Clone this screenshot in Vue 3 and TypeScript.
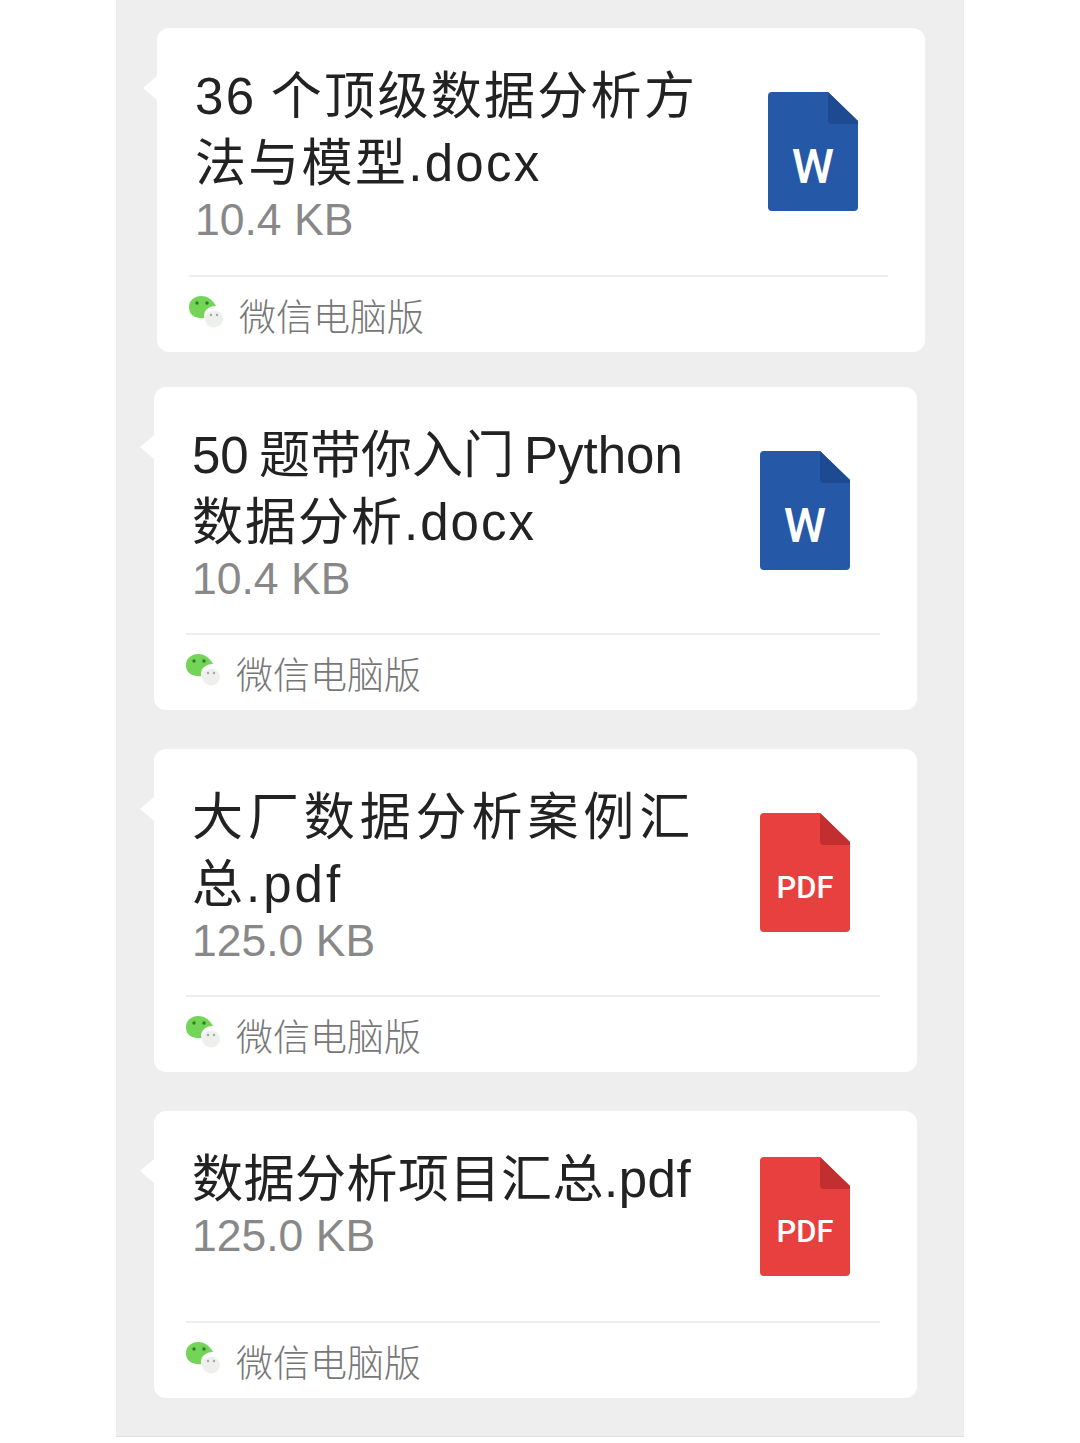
<script setup lang="ts">
interface TitleLine {
  text: string
  spacing: number
  wordSpacing?: number
}

interface FileCard {
  lines: TitleLine[]
  size: string
  kind: 'word' | 'pdf'
}

// the titles are justified a little differently per line in the original
const cards: FileCard[] = [
  {
    lines: [
      { text: '36 个顶级数据分析方', spacing: 2.3, wordSpacing: -2 },
      { text: '法与模型.docx', spacing: 2.3 },
    ],
    size: '10.4 KB',
    kind: 'word',
  },
  {
    lines: [
      { text: '50 题带你入门 Python', spacing: 0, wordSpacing: -4 },
      { text: '数据分析.docx', spacing: 2 },
    ],
    size: '10.4 KB',
    kind: 'word',
  },
  {
    lines: [
      { text: '大厂数据分析案例汇', spacing: 4.9 },
      { text: '总.pdf', spacing: 3 },
    ],
    size: '125.0 KB',
    kind: 'pdf',
  },
  {
    lines: [{ text: '数据分析项目汇总.pdf', spacing: 0.5 }],
    size: '125.0 KB',
    kind: 'pdf',
  },
]
</script>

<template>
  <div class="shell">
    <div v-for="(card, i) in cards" :key="i" class="card">
      <div class="body">
        <div class="text">
          <div
            v-for="line in card.lines"
            :key="line.text"
            class="title"
            :style="{ letterSpacing: line.spacing + 'px', wordSpacing: (line.wordSpacing ?? 0) + 'px' }"
          >{{ line.text }}</div>
          <div class="size">{{ card.size }}</div>
        </div>
        <svg class="file-icon" width="90" height="119" viewBox="0 0 90 119">
          <path
            d="M4 0H60L90 29V115a4 4 0 0 1-4 4H4a4 4 0 0 1-4-4V4a4 4 0 0 1 4-4Z"
            :fill="card.kind === 'word' ? '#2559a7' : '#e83f3f'"
          />
          <path d="M60 0L90 29V32H64a4 4 0 0 1-4-4Z" :fill="card.kind === 'word' ? '#1d4a90' : '#c22f30'" />
          <text v-if="card.kind === 'word'" x="45" y="91" class="w-mark">W</text>
          <text v-else x="45" y="85" class="pdf-mark">PDF</text>
        </svg>
      </div>
      <div class="footer">
        <svg class="wechat" width="36" height="34" viewBox="0 0 36 34">
          <ellipse cx="25" cy="24" rx="9" ry="8.500" fill="#eef0ee" />
          <path d="M0 12C0 5 6 1 12 1c6 0 11 3 15 10-6 0-11 3-12 9 0 1 0 2 .4 3-3 .4-5 .4-7-.4C2 21 0 17 0 12Z" fill="#74d457" />
          <circle cx="8" cy="8" r="1.700" fill="#2f7d2a" />
          <circle cx="18" cy="8" r="1.700" fill="#2f7d2a" />
          <circle cx="22" cy="20" r="1.200" fill="#a5a5a5" />
          <circle cx="28" cy="20" r="1.200" fill="#a5a5a5" />
        </svg>
        <span class="source">微信电脑版</span>
      </div>
    </div>
  </div>
</template>

<style>
html,
body {
  background: #ffffff;
}
</style>

<style scoped>
.shell {
  box-sizing: border-box;
  width: 848px;
  height: 1437px;
  margin-left: 116px;
  padding-top: 28px;
  background: #eeeeee;
  border-bottom: 1px solid #dedede;
  font-family: "Noto Sans CJK SC", "Noto Sans", sans-serif;
}

.card {
  position: relative;
  width: 763px;
  margin: 0 0 39px 38px;
  background: #ffffff;
  border-radius: 12px;
}

.card:first-child {
  width: 768px;
  margin-left: 41px;
  margin-bottom: 35px;
}

.card::before {
  content: "";
  position: absolute;
  left: -14px;
  top: 48px;
  width: 14px;
  height: 24px;
  background: #ffffff;
  clip-path: polygon(100% 0, 0 50%, 100% 100%);
}

.body {
  display: flex;
  justify-content: space-between;
  min-height: 210px;
  box-sizing: border-box;
  padding: 0 67px 31px 38px;
}

.card:first-child .body {
  padding-bottom: 32px;
}

.text {
  padding-top: 35px;
}

.title {
  font-family: "Liberation Sans", "Noto Sans CJK SC", sans-serif;
  font-size: 51px;
  line-height: 67px;
  color: #222222;
  white-space: nowrap;
}

.size {
  margin-top: -1px;
  font-family: "Liberation Sans", Arial, sans-serif;
  font-size: 44.500px;
  line-height: 47px;
  color: #888888;
}

.file-icon {
  align-self: center;
  margin-top: 31px;
  flex-shrink: 0;
}

.card:first-child .file-icon {
  margin-top: 32px;
}

.w-mark,
.pdf-mark {
  fill: #ffffff;
  text-anchor: middle;
  font-family: Roboto, "Liberation Sans", sans-serif;
  font-weight: 500;
}

.w-mark {
  font-size: 48px;
}

.pdf-mark {
  font-size: 31px;
}

.footer {
  display: flex;
  align-items: center;
  height: 77px;
  margin: 0 37px 0 32px;
  border-top: 2px solid #eeeeee;
  box-sizing: border-box;
}

.wechat {
  flex-shrink: 0;
  margin-top: -6px;
  margin-right: 14px;
  filter: blur(0.4px);
}

.source {
  font-size: 37px;
  font-weight: 300;
  color: #777777;
}
</style>
